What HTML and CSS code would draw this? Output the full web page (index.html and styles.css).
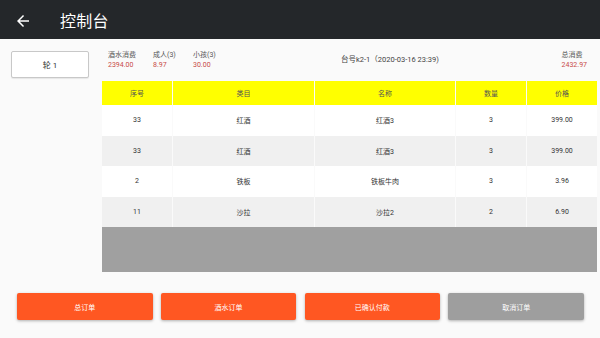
FILE: index.html
```html
<!DOCTYPE html>
<html lang="zh">
<head>
<meta charset="utf-8">
<link rel="stylesheet" href="styles.css">
</head>
<body>
<div class="appbar">
  <svg class="back" width="18" height="18" viewBox="0 0 24 24"><path fill="#fff" d="M20 11H7.83l5.59-5.59L12 4l-8 8 8 8 1.41-1.41L7.83 13H20v-2z"/></svg>
  <div class="title">控制台</div>
</div>
<div class="main">
  <div class="side">
    <div class="round">轮 1</div>
  </div>
  <div class="content">
    <div class="info">
      <div class="stat s1"><div class="lbl">酒水消费</div><div class="val">2394.00</div></div>
      <div class="stat s2"><div class="lbl">成人(3)</div><div class="val">8.97</div></div>
      <div class="stat s3"><div class="lbl">小孩(3)</div><div class="val">30.00</div></div>
      <div class="table-no">台号k2-1（2020-03-16 23:39)</div>
      <div class="stat total"><div class="lbl">总消费</div><div class="val">2432.97</div></div>
    </div>
    <div class="grid">
      <div class="row head"><div>序号</div><div>类目</div><div>名称</div><div>数量</div><div>价格</div></div>
      <div class="row"><div>33</div><div>红酒</div><div>红酒3</div><div>3</div><div>399.00</div></div>
      <div class="row alt"><div>33</div><div>红酒</div><div>红酒3</div><div>3</div><div>399.00</div></div>
      <div class="row"><div>2</div><div>铁板</div><div>铁板牛肉</div><div>3</div><div>3.96</div></div>
      <div class="row alt"><div>11</div><div>沙拉</div><div>沙拉2</div><div>2</div><div>6.90</div></div>
      <div class="filler"></div>
    </div>
  </div>
</div>
<div class="actions">
  <div class="btn orange">总订单</div>
  <div class="btn orange">酒水订单</div>
  <div class="btn orange">已确认付款</div>
  <div class="btn gray">取消订单</div>
</div>
</body>
</html>
```
FILE: styles.css
```css
* { box-sizing: border-box; }
html, body { margin: 0; padding: 0; }
body {
  width: 600px;
  height: 338px;
  overflow: hidden;
  background: #fafafa;
  font-family: Roboto, "Noto Sans CJK SC", sans-serif;
  color: #333;
}
.appbar {
  height: 39px;
  background: #24272a;
  display: flex;
  align-items: center;
  padding-left: 14px;
}
.back { display: block; margin-top: 2px; }
.title {
  color: #fff;
  font-size: 16px;
  margin-left: 28px;
  margin-top: 1px;
  letter-spacing: 0.3px;
}
.main { display: flex; }
.side { width: 102px; padding: 12px 0 0 11px; }
.round {
  width: 78px;
  height: 27px;
  background: #fff;
  border: 1px solid #c8c8c8;
  border-radius: 2px;
  display: flex;
  align-items: center;
  justify-content: center;
  font-size: 8px;
  color: #333;
  box-shadow: 0 1px 1px rgba(0,0,0,0.08);
}
.content { width: 495px; padding-top: 11px; }
.info {
  height: 31px;
  display: flex;
  align-items: flex-start;
  font-size: 7px;
  line-height: 10px;
}
.stat .lbl { color: #555; }
.stat .val { color: #c84a48; }
.s1 { margin-left: 6px; width: 45px; }
.s2 { width: 40px; }
.s3 { width: 148px; }
.table-no { padding-top: 5px; color: #444; font-size: 7.5px; }
.total { margin-left: auto; margin-right: 10px; }
.grid { display: flex; flex-direction: column; }
.row {
  display: grid;
  grid-template-columns: 70px 141px 140px 70px 70px;
  column-gap: 1px;
  height: 30.5px;
}
.row > div {
  background: #fff;
  display: flex;
  align-items: center;
  justify-content: center;
  font-size: 7px;
  color: #333;
}
.row.alt > div { background: #f0f0f0; }
.row.head { height: 24px; background: #fafafa; }
.row.head > div { background: #ffff00; color: #555; }
.filler { height: 45px; background: #a0a0a0; }
.actions {
  display: flex;
  gap: 8.3px;
  padding-left: 17px;
  margin-top: 21px;
}
.btn {
  width: 135.5px;
  height: 27px;
  border-radius: 2px;
  display: flex;
  align-items: center;
  justify-content: center;
  color: #fff;
  font-size: 7px;
  box-shadow: 0 1px 3px rgba(0,0,0,0.3);
}
.orange { background: #ff5722; }
.gray { background: #9e9e9e; }
```
